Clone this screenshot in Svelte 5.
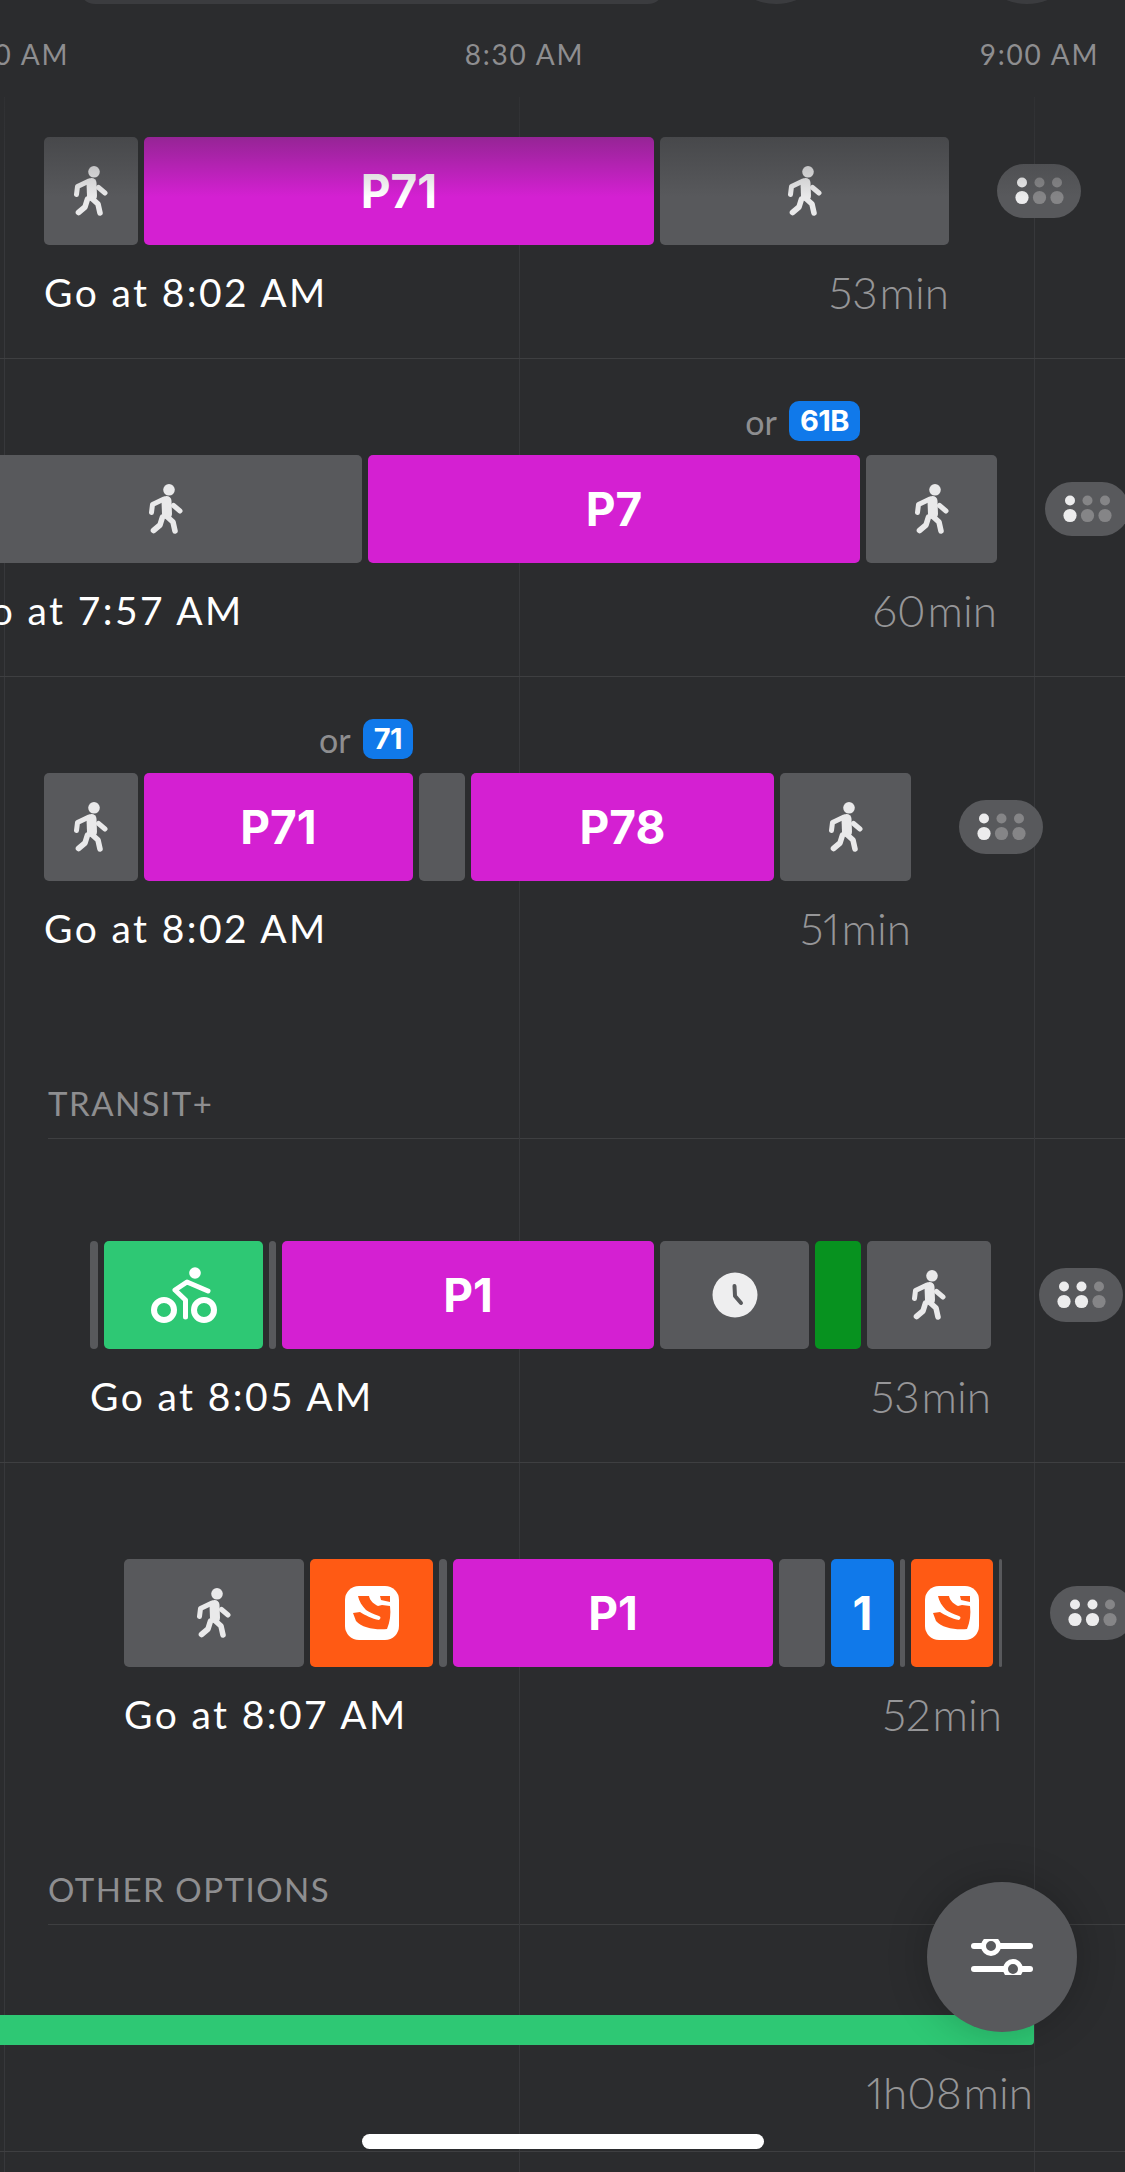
<script>
    const magenta = "#d420d2"
    const gray = "#58595c"

    const walk = (w, pad = 0) => ({ w, bg: gray, icon: "walk", pad })
    const blank = (w, bg = gray) => ({ w, bg })
    const bus = (w, label, bg = magenta) => ({ w, bg, label })
    const scoot = (w) => ({ w, bg: "#ff5a14", icon: "scoot" })

    const trips = [
        { left: 44, go: "Go at 8:02 AM", mins: "53", lit: 1, segs: [walk(94), bus(510, "P71"), walk(289)] },
        { left: -40, go: "Go at 7:57 AM", mins: "60", lit: 1, alt: "61B", altEnd: 900, segs: [walk(402, 9), bus(492, "P7"), walk(131)] },
        { left: 44, go: "Go at 8:02 AM", mins: "51", lit: 1, alt: "71", altEnd: 369, last: true, segs: [walk(94), bus(269, "P71"), blank(46), bus(303, "P78"), walk(131)] }
    ]

    const transitPlus = [
        {
            left: 90, go: "Go at 8:05 AM", mins: "53", lit: 2,
            segs: [blank(8), { w: 159, bg: "#2ec874", icon: "bike" }, blank(7), bus(372, "P1"), { w: 149, bg: gray, icon: "clock" }, blank(46, "#07921f"), walk(124)]
        },
        {
            left: 124, go: "Go at 8:07 AM", mins: "52", lit: 2, last: true,
            segs: [walk(180), scoot(123), blank(8), bus(320, "P1"), blank(46), bus(63, "1", "#1079ea"), blank(5), scoot(82), blank(3)]
        }
    ]

    const barWidth = (segs) => segs.reduce((sum, s) => sum + s.w, 0) + (segs.length - 1) * 6
</script>

{#snippet walkIcon()}
    <svg viewBox="0 0 34 50" width="34" height="50">
        <circle cx="20" cy="5.8" r="5.8" fill="#e9e9ea" />
        <g fill="none" stroke="#e9e9ea" stroke-linecap="round" stroke-linejoin="round">
            <path d="M15 15 L3.5 20.5 L2.5 28.5" stroke-width="5" />
            <path d="M17.5 17 L18 30" stroke-width="10" />
            <path d="M24.5 21.5 L31 27" stroke-width="5" />
            <path d="M13.5 33 L11 41 L4.5 46.5" stroke-width="5.6" />
            <path d="M18.5 33 L24 38 L26 47" stroke-width="5.6" />
        </g>
    </svg>
{/snippet}

{#snippet bikeIcon()}
    <svg viewBox="0 0 70 60" width="70" height="60">
        <circle cx="46" cy="8" r="5.8" fill="#fff" />
        <g fill="none" stroke="#fff" stroke-linecap="round" stroke-linejoin="round">
            <circle cx="15" cy="45" r="10" stroke-width="6" />
            <circle cx="55" cy="45" r="10" stroke-width="6" />
            <path d="M59 26 L38 17 L26 25 L36.5 35 L36.5 52" stroke-width="5" />
        </g>
    </svg>
{/snippet}

{#snippet clockIcon()}
    <svg viewBox="0 0 46 46" width="46" height="46">
        <circle cx="23" cy="23" r="22.5" fill="#eeeeef" />
        <path d="M22.5 14 L23 24 L29 31" fill="none" stroke="#58595c" stroke-width="4" stroke-linecap="round" stroke-linejoin="round" />
    </svg>
{/snippet}

{#snippet scootIcon()}
    <svg viewBox="0 0 54 54" width="54" height="54">
        <rect width="54" height="54" rx="14" fill="#fff" />
        <path d="M13 10 L24 10 C25 15 29 18 33 20 L37 19 L45 20 C46 28 45 36 42 43 C30 44 17 42 11 35 L8 27 L15 26 C20 29 27 33 34 34 C36 32 36 31 34 30 C28 28 24 26 21 24 C17 20 14 15 13 10 Z" fill="#ff5a14" />
        <path d="M35 10 L45 10 L45 16 L36 14 Z" fill="#ff5a14" />
    </svg>
{/snippet}

{#snippet crowding(lit)}
    <div class="crowd">
        <svg viewBox="0 0 84 54" width="84" height="54">
            {#each [25, 42.5, 60] as x, i}
                <circle cx={x} cy="18.5" r="5" fill={i < lit ? "#ececed" : "#858587"} />
                <circle cx={x} cy="33.5" r="6.6" fill={i < lit ? "#ececed" : "#858587"} />
            {/each}
        </svg>
    </div>
{/snippet}

{#snippet trip(t)}
    <section class="row" class:last={t.last}>
        <div class="alt" style="margin-left: {t.left}px; width: {t.altEnd ?? 0}px">
            {#if t.alt}
                <span class="or">or</span>
                <span class="badge">{t.alt}</span>
            {/if}
        </div>
        <div class="track" style="margin-left: {t.left}px">
            <div class="bar">
                {#each t.segs as s}
                    <div class="seg" style="width: {s.w}px; background: {s.bg}; padding-left: {s.pad ?? 0}px">
                        {#if s.label}{s.label}{/if}
                        {#if s.icon === "walk"}{@render walkIcon()}{/if}
                        {#if s.icon === "bike"}{@render bikeIcon()}{/if}
                        {#if s.icon === "clock"}{@render clockIcon()}{/if}
                        {#if s.icon === "scoot"}{@render scootIcon()}{/if}
                    </div>
                {/each}
            </div>
            {@render crowding(t.lit)}
        </div>
        <div class="meta" style="margin-left: {t.left}px; width: {barWidth(t.segs)}px">
            <span class="go">{t.go}</span>
            <span class="dur">{t.mins}<span class="unit">min</span></span>
        </div>
    </section>
{/snippet}

<div class="page">
    <div class="gridlines">
        <i></i><i></i><i></i>
    </div>

    <div class="top">
        <div class="search"></div>
        <div class="round"></div>
        <div class="round"></div>
    </div>

    <div class="axis">
        <span>8:00 AM</span>
        <span>8:30 AM</span>
        <span>9:00 AM</span>
    </div>

    <div class="fade"></div>

    {#each trips as t}
        {@render trip(t)}
    {/each}

    <h2 class="heading">TRANSIT+</h2>

    <div class="after-heading">
        {#each transitPlus as t}
            {@render trip(t)}
        {/each}
    </div>

    <h2 class="heading">OTHER OPTIONS</h2>

    <section class="bike-row">
        <div class="bike-bar"></div>
        <div class="meta" style="width: 1033px">
            <span></span>
            <span class="dur">1h08<span class="unit">min</span></span>
        </div>
    </section>

    <button class="fab" aria-label="Options">
        <svg viewBox="0 0 62 36" width="62" height="36">
            <g stroke="#fff" stroke-width="6" stroke-linecap="round">
                <path d="M3 7 H59" />
                <path d="M3 30 H59" />
            </g>
            <circle cx="20" cy="7" r="7.5" fill="#58595c" stroke="#fff" stroke-width="5" />
            <circle cx="42" cy="30" r="7.5" fill="#58595c" stroke="#fff" stroke-width="5" />
        </svg>
    </button>

    <div class="home"></div>
</div>

<style>
    :global(body) {
        margin: 0;
        background: #2b2c2e;
    }

    .page {
        position: relative;
        width: 1125px;
        height: 2172px;
        overflow: hidden;
        background: #2b2c2e;
        font-family: Lato, "Open Sans", sans-serif;
    }

    .gridlines {
        position: absolute;
        top: 97px;
        bottom: 0;
        left: 4px;
        display: flex;
        gap: 514px;
    }

    .gridlines i {
        width: 1px;
        background: #37383b;
    }

    .top {
        display: flex;
        height: 4px;
        padding-left: 79px;
        overflow: hidden;
    }

    .search {
        flex: 0 0 585px;
        height: 40px;
        margin-top: -36px;
        border-radius: 16px;
        background: #3b3c3f;
    }

    .round {
        flex: 0 0 110px;
        height: 110px;
        margin-top: -106px;
        margin-left: 57px;
        border-radius: 50%;
        background: #3b3c3f;
    }

    .round:last-child {
        margin-left: 141px;
    }

    .axis {
        display: flex;
        height: 30px;
        margin-top: 35px;
        margin-bottom: -28px;
        margin-left: -248px;
        color: #8e8e90;
        font-size: 28px;
        line-height: 30px;
        letter-spacing: 1.8px;
    }

    .axis span {
        flex: 0 0 515px;
        text-align: center;
    }

    .fade {
        position: absolute;
        z-index: 2;
        top: 97px;
        left: 0;
        right: 0;
        height: 100px;
        background: linear-gradient(rgba(43, 44, 46, 0.62), rgba(43, 44, 46, 0));
        pointer-events: none;
    }

    .row {
        position: relative;
        height: 318px;
        box-sizing: border-box;
        padding-top: 42px;
        border-bottom: 1px solid #3e3f41;
    }

    .row.last {
        border-bottom-color: transparent;
    }

    .after-heading {
        padding-top: 6px;
    }

    .alt {
        display: flex;
        justify-content: flex-end;
        align-items: center;
        gap: 12px;
        height: 40px;
        margin-bottom: 14px;
    }

    .or {
        color: #8e8e90;
        font-size: 34px;
    }

    .badge {
        padding: 0 11px;
        height: 40px;
        border-radius: 10px;
        background: #1079ea;
        color: #fff;
        font-family: Inter, sans-serif;
        font-size: 29px;
        font-weight: 700;
        line-height: 40px;
        letter-spacing: -0.5px;
    }

    .track {
        display: flex;
        align-items: center;
        gap: 48px;
        width: max-content;
    }

    .bar {
        display: flex;
        gap: 6px;
        flex-shrink: 0;
        height: 108px;
    }

    .seg {
        display: flex;
        align-items: center;
        justify-content: center;
        flex-shrink: 0;
        box-sizing: border-box;
        border-radius: 5px;
        color: #fff;
        font-family: Inter, sans-serif;
        font-size: 46px;
        font-weight: 700;
    }

    .crowd {
        flex: 0 0 84px;
        height: 54px;
        border-radius: 27px;
        background: #58595c;
    }

    .crowd svg {
        display: block;
    }

    .meta {
        display: flex;
        justify-content: space-between;
        margin-top: 25px;
        line-height: 44px;
    }

    .go {
        color: #fff;
        font-size: 39px;
        letter-spacing: 2.4px;
        white-space: nowrap;
    }

    .dur {
        color: #969698;
        font-size: 44px;
        font-weight: 300;
        font-variant-numeric: proportional-nums;
    }

    .unit {
        margin-left: 2px;
    }

    .heading {
        margin: 0 0 0 48px;
        padding: 90px 0 17px;
        border-bottom: 1px solid #3e3f41;
        color: #8e8e90;
        font-size: 33px;
        font-weight: 400;
        line-height: 36px;
        letter-spacing: 1.5px;
    }

    .bike-row {
        position: relative;
        height: 227px;
        box-sizing: border-box;
        padding-top: 90px;
        border-bottom: 1px solid #3e3f41;
    }

    .bike-bar {
        width: 1034px;
        height: 30px;
        border-radius: 0 4px 4px 0;
        background: #2ec874;
    }

    .fab {
        position: absolute;
        z-index: 3;
        left: 927px;
        top: 1882px;
        display: flex;
        align-items: center;
        justify-content: center;
        width: 150px;
        height: 150px;
        padding: 0;
        border: 0;
        border-radius: 50%;
        background: #58595c;
        box-shadow: 0 0 40px rgba(0, 0, 0, 0.22);
    }

    .home {
        position: absolute;
        z-index: 3;
        left: 362px;
        top: 2134px;
        width: 402px;
        height: 15px;
        border-radius: 8px;
        background: #fff;
    }
</style>
